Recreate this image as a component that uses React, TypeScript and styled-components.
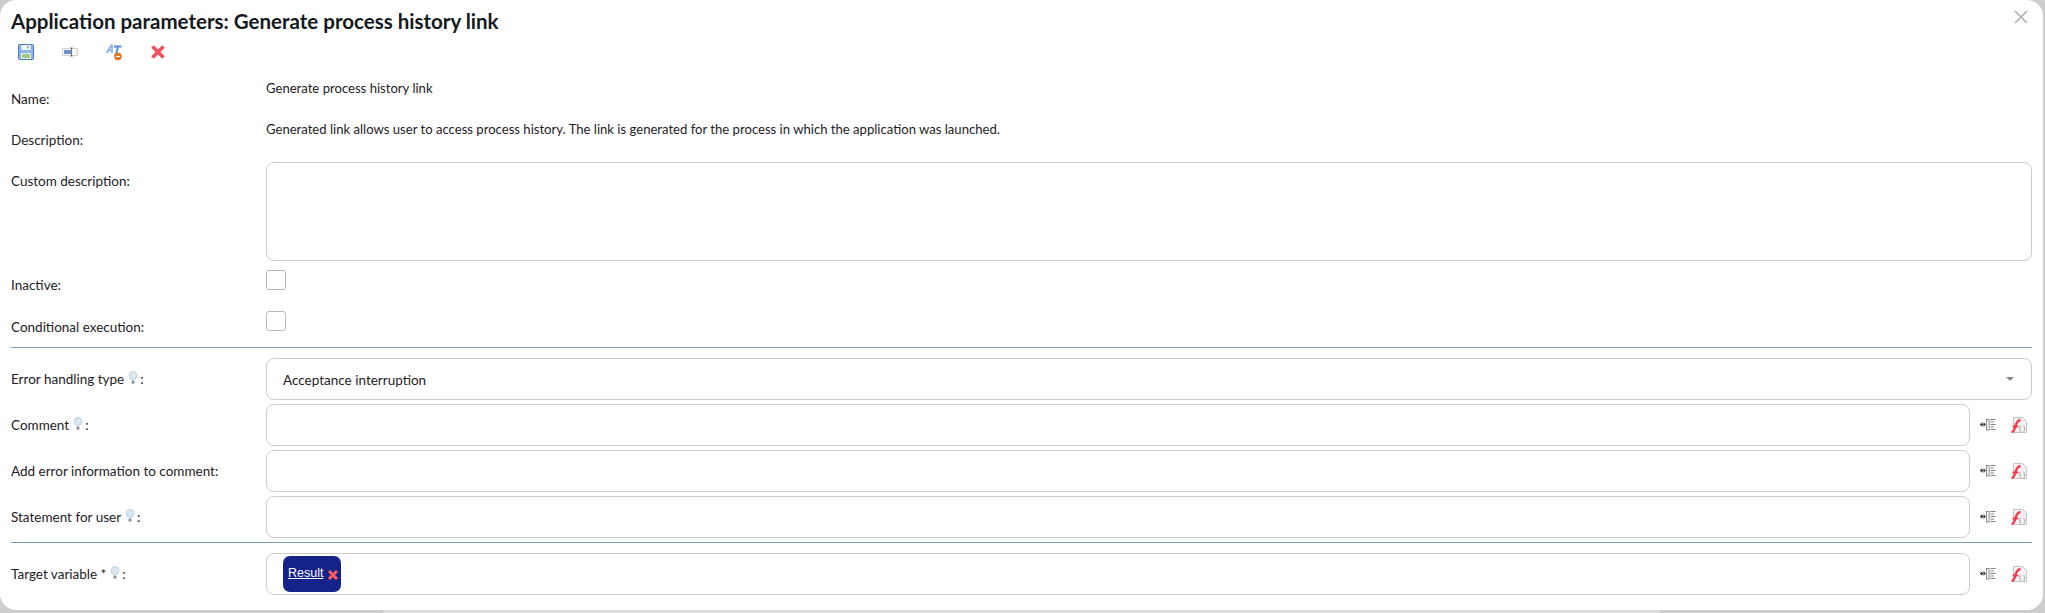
import React, { FC } from 'react';
import styled, { createGlobalStyle } from 'styled-components';

const GlobalStyle = createGlobalStyle`
  html, body {
    margin: 0;
    padding: 0;
    height: 100%;
    overflow: hidden;
    background: linear-gradient(90deg, #cdcdcd 0, #cdcdcd 383px, #dcdcdc 383px, #dcdcdc 1660px, #cdcdcd 1660px);
  }
`;

const Modal = styled.div`
  box-sizing: border-box;
  width: 2043px;
  height: 610px;
  padding: 0 11px;
  background: #fff;
  border-radius: 16px;
  position: relative;
  font-family: Lato, "Liberation Sans", sans-serif;
  font-size: 13.5px;
  color: #1d2226;
`;

const Title = styled.h1`
  margin: 0;
  height: 42px;
  line-height: 42px;
  font-size: 20.5px;
  font-weight: 700;
  color: #14191e;
`;

const Toolbar = styled.div`
  display: flex;
  height: 36px;
  gap: 28px;
  padding-left: 7px;
  align-items: flex-start;
  padding-top: 1px;
  box-sizing: border-box;
`;

const ToolIcon = styled.svg`
  width: 16px;
  height: 18px;
  display: block;
`;

const CloseButton = styled.svg`
  position: absolute;
  top: 10px;
  right: 15px;
  width: 14px;
  height: 14px;
  stroke: #a8a8a8;
  stroke-width: 1.4;
`;

const Row = styled.div<{ $height: number }>`
  display: grid;
  grid-template-columns: 255px 1fr;
  height: ${p => p.$height}px;
`;

const Label = styled.div<{ $top?: number }>`
  padding-top: ${p => p.$top ?? 0}px;
  line-height: 18px;
  display: flex;
  align-items: flex-start;
  white-space: nowrap;
`;

const Value = styled.div`
  font-size: 13.1px;
  line-height: 20px;
`;

const TextArea = styled.div`
  box-sizing: border-box;
  height: 99px;
  border: 1px solid #ccc;
  border-radius: 8px;
`;

const CheckBox = styled.div`
  box-sizing: border-box;
  width: 20px;
  height: 20px;
  margin-top: 9px;
  border: 1px solid #b9b9b9;
  border-radius: 3px;
`;

const Divider = styled.hr<{ $after: number }>`
  margin: 0 0 ${p => p.$after}px;
  border: 0;
  height: 1px;
  background: #7c9cbc;
`;

const FieldRow = styled.div<{ $gap?: number }>`
  display: grid;
  grid-template-columns: 255px 1fr;
  align-items: center;
  height: 42px;
  margin-bottom: ${p => p.$gap ?? 4}px;
`;

const Control = styled.div`
  display: flex;
  align-items: center;
`;

const Box = styled.div`
  box-sizing: border-box;
  flex: 1;
  height: 42px;
  border: 1px solid #ccc;
  border-radius: 8px;
  display: flex;
  align-items: center;
  padding-left: 16px;
  justify-content: space-between;
`;

const SelectText = styled.span`
  font-size: 13.5px;
  padding-top: 2px;
`;

const Caret = styled.span`
  width: 0;
  height: 0;
  margin-right: 17px;
  border-left: 4px solid transparent;
  border-right: 4px solid transparent;
  border-top: 4px solid #8a8a8a;
`;

const Actions = styled.div`
  width: 62px;
  display: flex;
  align-items: center;
  padding-left: 10px;
  gap: 15px;
  box-sizing: border-box;
`;

const ActionIcon = styled.svg`
  width: 16px;
  height: 16px;
  display: block;
`;

const Chip = styled.span`
  display: inline-flex;
  align-items: center;
  height: 36px;
  padding: 0 3px 0 5px;
  background: #152289;
  border-radius: 7px;
  color: #fff;
  font-family: "Liberation Sans", Arial, sans-serif;
  font-size: 12.5px;
  gap: 5px;
`;

const ChipLink = styled.span`
  text-decoration: underline;
  margin-top: -2px;
`;

const ChipRemove = styled.svg`
  width: 10px;
  height: 10px;
  stroke: #ff5a5f;
  stroke-width: 3;
  margin-top: 2px;
`;

const BulbIcon = styled.svg`
  width: 10px;
  height: 14px;
  margin: 1px 2px 0 4px;
`;

const Bulb: FC = () => (
  <BulbIcon viewBox="0 0 10 14">
    <circle cx="5" cy="4.5" r="4" fill="#dbe7f0" stroke="#b4cbdc" strokeWidth="0.8" />
    <path d="M3.4 8.5h3.2v1.5H3.4z" fill="#cfd8de" />
    <path d="M3.6 10h2.8v2.6H3.6z" fill="#8c8c8c" />
  </BulbIcon>
);

const InsertIcon: FC = () => (
  <ActionIcon viewBox="0 0 16 16">
    <path d="M0 7.500h3.500M1.700 5.700v3.600" stroke="#444" strokeWidth="1.300" />
    <path d="M3.500 5l2.500 2.500L3.500 10z" fill="#444" />
    <rect x="6.500" y="2.500" width="2.600" height="10.500" fill="#f4f4f4" stroke="#777" strokeWidth="0.800" />
    <path d="M10.500 2.500h5M10.500 5h3.500M10.500 7.500h5M10.500 10h3.500M10.500 12.500h5" stroke="#808080" strokeWidth="1" />
  </ActionIcon>
);

const FormulaIcon: FC = () => (
  <ActionIcon viewBox="0 0 16 16">
    <path d="M2.500.5h9l4 4v11H2.500z" fill="#f2f2f2" stroke="#bdbdbd" strokeWidth="0.900" />
    <path d="M10 9c-1 0-.8 1.500-.8 2 0 .8-.4 1-.8 1 .4 0 .8.2.8 1 0 .5-.2 2 .8 2M12.500 9c1 0 .8 1.500.8 2 0 .8.4 1 .8 1-.4 0-.8.2-.8 1 0 .5.2 2-.8 2" fill="none" stroke="#8f8f8f" strokeWidth="0.700" />
    <path d="M.5 15.200c2-.3 2.800-2 3.600-5C5 6.500 6.200 3.600 9.500 3" fill="none" stroke="#f23a4c" strokeWidth="2.300" />
    <path d="M1.500 9.500h6" stroke="#f23a4c" strokeWidth="1.800" />
  </ActionIcon>
);

const FieldActions: FC = () => (
  <Actions>
    <InsertIcon />
    <FormulaIcon />
  </Actions>
);

const App: FC = () => (
  <>
    <GlobalStyle />
    <Modal>
      <CloseButton viewBox="0 0 14 14">
        <path d="M1 1l12 12M13 1L1 13" />
      </CloseButton>
      <Title>Application parameters: Generate process history link</Title>
      <Toolbar>
        <ToolIcon viewBox="0 0 16 18">
          <rect x="0.500" y="1.500" width="15" height="15" rx="1" fill="#8fb5e8" stroke="#4a78b8" />
          <rect x="3.500" y="2" width="9" height="5" fill="#f2f6fb" />
          <path d="M9 3h1.500v2.500H9z" fill="#7fa3d4" />
          <rect x="3" y="10" width="10" height="6" fill="#eef4e6" />
          <path d="M4 12h8M4 14h8" stroke="#86b86a" strokeWidth="1.300" />
        </ToolIcon>
        <ToolIcon viewBox="0 0 16 18">
          <rect x="0.500" y="5.500" width="15" height="7" fill="#f6f6f6" stroke="#d5d5d5" />
          <rect x="2" y="7" width="7" height="4" fill="#6f95cf" />
          <path d="M9.500 5v8M8.300 5h2.400M8.300 13h2.400" stroke="#555" strokeWidth="0.800" />
        </ToolIcon>
        <ToolIcon viewBox="0 0 16 18">
          <path d="M.5 10L6 1.500M6 1.500V10M2.500 7.500H6" fill="none" stroke="#8ab2ea" strokeWidth="1.700" />
          <path d="M8 3.500h7.500M12 3.500L9.500 13" fill="none" stroke="#5c8dd6" strokeWidth="2" />
          <circle cx="12" cy="13.500" r="3.700" fill="#e0701c" />
          <path d="M9.800 13.500h4.400" stroke="#fff" strokeWidth="1.200" />
        </ToolIcon>
        <ToolIcon viewBox="0 0 16 18">
          <path d="M2.500 3.500l11 11M13.500 3.500l-11 11" stroke="#f4515c" strokeWidth="3.600" />
        </ToolIcon>
      </Toolbar>
      <Row $height={41}>
        <Label $top={12}>Name:</Label>
        <Value>Generate process history link</Value>
      </Row>
      <Row $height={43}>
        <Label $top={12}>Description:</Label>
        <Value>
          Generated link allows user to access process history. The link is generated for the process in which the
          application was launched.
        </Value>
      </Row>
      <Row $height={99}>
        <Label $top={10}>Custom description:</Label>
        <TextArea />
      </Row>
      <Row $height={41}>
        <Label $top={15}>Inactive:</Label>
        <CheckBox />
      </Row>
      <Row $height={45}>
        <Label $top={16}>Conditional execution:</Label>
        <CheckBox />
      </Row>
      <Divider $after={10} />
      <FieldRow>
        <Label>
          Error handling type <Bulb />:
        </Label>
        <Control>
          <Box>
            <SelectText>Acceptance interruption</SelectText>
            <Caret />
          </Box>
        </Control>
      </FieldRow>
      <FieldRow>
        <Label>
          Comment <Bulb />:
        </Label>
        <Control>
          <Box />
          <FieldActions />
        </Control>
      </FieldRow>
      <FieldRow>
        <Label>Add error information to comment:</Label>
        <Control>
          <Box />
          <FieldActions />
        </Control>
      </FieldRow>
      <FieldRow>
        <Label>
          Statement for user <Bulb />:
        </Label>
        <Control>
          <Box />
          <FieldActions />
        </Control>
      </FieldRow>
      <Divider $after={10} />
      <FieldRow>
        <Label>
          Target variable *<Bulb />:
        </Label>
        <Control>
          <Box>
            <Chip>
              <ChipLink>Result</ChipLink>
              <ChipRemove viewBox="0 0 10 10">
                <path d="M1 1l8 8M9 1L1 9" />
              </ChipRemove>
            </Chip>
          </Box>
          <FieldActions />
        </Control>
      </FieldRow>
    </Modal>
  </>
);

export default App;
